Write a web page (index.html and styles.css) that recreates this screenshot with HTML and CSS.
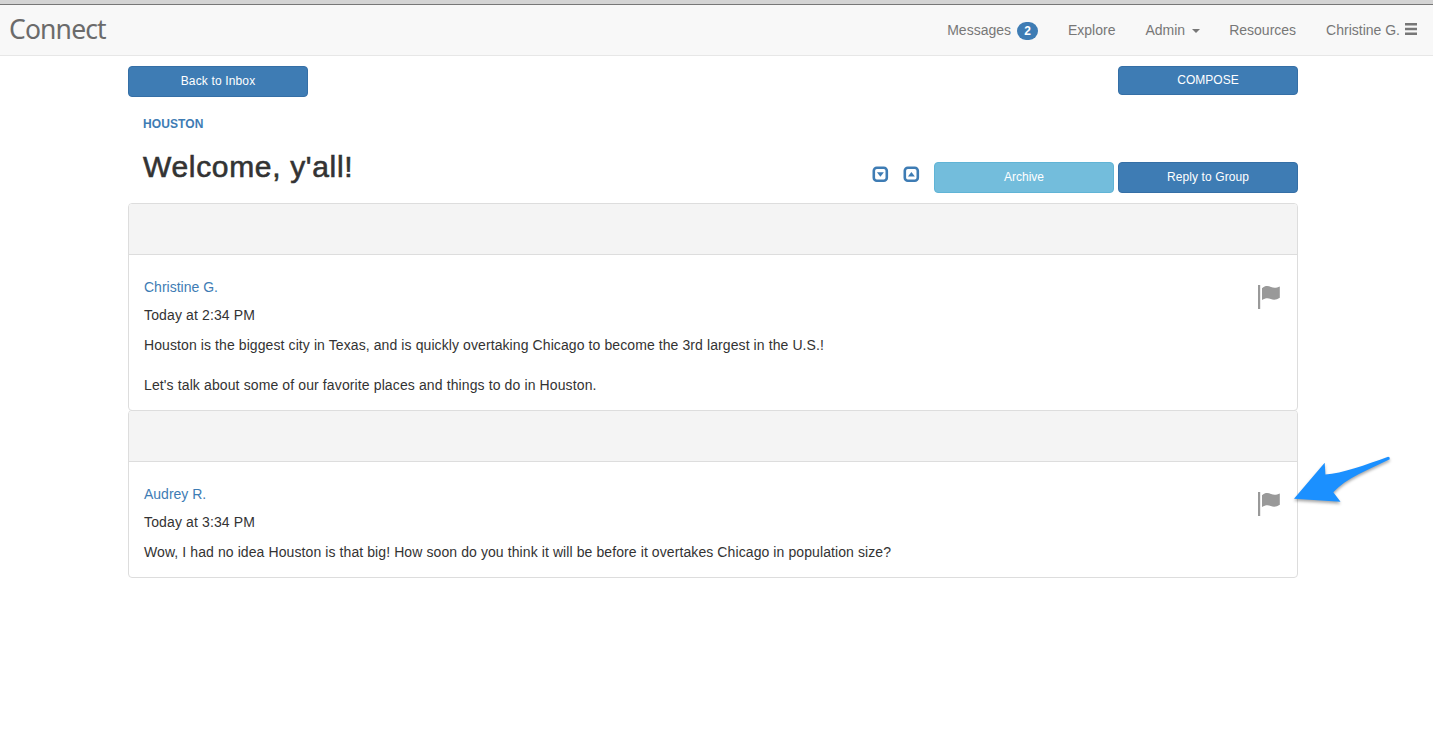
FILE: index.html
```html
<!DOCTYPE html>
<html lang="en">
<head>
<meta charset="utf-8">
<title>Connect</title>
<link rel="stylesheet" href="styles.css">
</head>
<body>
<div class="chrome-edge"></div>
<header class="navbar">
  <a class="brand">Connect</a>
  <nav class="nav">
    <a class="nav-messages">Messages <span class="badge">2</span></a>
    <a class="nav-explore">Explore</a>
    <a class="nav-admin">Admin <span class="caret"></span></a>
    <a class="nav-resources">Resources</a>
    <a class="nav-user">Christine G. <svg class="bars" width="12" height="12" viewBox="0 0 12 12"><path d="M0 0h12v2.500H0zM0 4.700h12v2.600H0zM0 9.500h12V12H0z"/></svg></a>
  </nav>
</header>
<main class="container">
  <div class="toolbar">
    <a class="btn btn-primary btn-back">Back to Inbox</a>
    <a class="btn btn-primary btn-compose">COMPOSE</a>
  </div>
  <div class="group-name">HOUSTON</div>
  <div class="heading">
    <h1>Welcome, y'all!</h1>
    <div class="actions">
      <svg class="toggle" width="16" height="16" viewBox="0 0 16 16"><rect x="1.800" y="1.800" width="13" height="13" rx="3"/><path d="M4.900 6.200h7L8.400 10.700z"/></svg>
      <svg class="toggle toggle-up" width="16" height="16" viewBox="0 0 16 16"><rect x="1.800" y="1.800" width="13" height="13" rx="3"/><path d="M4.900 10.500h7L8.400 6z"/></svg>
      <a class="btn btn-info">Archive</a>
      <a class="btn btn-primary btn-reply">Reply to Group</a>
    </div>
  </div>
  <section class="panel">
    <div class="panel-heading"></div>
    <div class="panel-body">
      <a class="author">Christine G.</a>
      <div class="time">Today at 2:34 PM</div>
      <p class="line-long">Houston is the biggest city in Texas, and is quickly overtaking Chicago to become the 3rd largest in the U.S.!</p>
      <p class="line-second">Let's talk about some of our favorite places and things to do in Houston.</p>
      <svg class="flag" width="24" height="26" viewBox="0 0 24 26"><path d="M1 1h2.200v24H1zM5 4.200C8 1.600 11 1.700 14 3c3 1.200 5.500 1 8.800-.6v11.400c-3 2-6 2.600-9 1.200-3-1.200-5.500-1-8.800 1z"/></svg>
    </div>
  </section>
  <section class="panel">
    <div class="panel-heading"></div>
    <div class="panel-body">
      <a class="author">Audrey R.</a>
      <div class="time">Today at 3:34 PM</div>
      <p class="line-reply">Wow, I had no idea Houston is that big! How soon do you think it will be before it overtakes Chicago in population size?</p>
      <svg class="flag" width="24" height="26" viewBox="0 0 24 26"><path d="M1 1h2.200v24H1zM5 4.200C8 1.600 11 1.700 14 3c3 1.200 5.500 1 8.800-.6v11.400c-3 2-6 2.600-9 1.200-3-1.200-5.500-1-8.800 1z"/></svg>
      <svg class="arrow" width="104" height="54" viewBox="0 0 104 54"><path d="M4 48.700 34.700 12.800 35.400 24.400C52 23.500 76 14.500 97.500 6.900Q100 6.500 99.800 9.200C79 19.500 56 28 43.300 42.300L50.500 51.700Z"/></svg>
    </div>
  </section>
</main>
</body>
</html>
```
FILE: styles.css
```css
* { box-sizing: border-box; }
body {
  margin: 0;
  background: #fff;
  color: #333;
  font: 14px/20px "Liberation Sans", Arial, sans-serif;
}
svg { display: block; }
.chrome-edge { height: 5px; background: #d4d4d4; border-bottom: 1px solid #777; }
.navbar {
  display: flex;
  justify-content: space-between;
  height: 51px;
  padding: 0 16px 0 9px;
  background: #f8f8f8;
  border-bottom: 1px solid #e7e7e7;
  color: #777;
}
.brand {
  font: 26.5px/48px "Noto Sans", sans-serif;
  letter-spacing: -0.85px;
  color: #6b6b6b;
}
.nav { display: flex; gap: 30px; line-height: 50px; }
.nav a { display: flex; align-items: center; white-space: nowrap; }
.badge {
  margin: 2px 0 0 6px;
  width: 21px;
  height: 18px;
  border-radius: 9px;
  background: #3e7cb4;
  color: #fff;
  font-size: 12px;
  font-weight: bold;
  line-height: 18px;
  text-align: center;
}
.caret {
  margin: 2px -1px 0 7px;
  border: 4px solid transparent;
  border-top-color: #777;
  border-bottom: 0;
}
.bars { margin: -3px 0 0 5px; fill: #777; }
.container { width: 1170px; margin: 10px 7px 0 128px; }
.toolbar { display: flex; justify-content: space-between; align-items: flex-start; }
.btn {
  width: 180px;
  height: 31px;
  border: 1px solid #356fa6;
  border-radius: 4px;
  color: #fff;
  font-size: 12px;
  line-height: 28px;
  text-align: center;
}
.btn-primary { background: #3e7cb4; }
.btn-back { letter-spacing: 0.15px; }
.btn-reply { letter-spacing: 0.1px; }
.btn-info { background: #73bddc; border-color: #60b4d6; }
.btn-compose { height: 29px; line-height: 26px; }
.group-name {
  margin: 17px 0 0 15px;
  color: #3e7cb4;
  font-size: 12px;
  font-weight: bold;
  letter-spacing: 0.1px;
}
.heading { display: flex; justify-content: space-between; height: 69px; padding-left: 15px; }
h1 {
  margin: 15px 0 0;
  font-size: 30px;
  line-height: 36px;
  font-weight: normal;
  letter-spacing: 0.67px;
  -webkit-text-stroke: 0.6px #333;
}
.actions { display: flex; gap: 4px; padding-top: 28px; }
.toggle { margin: 4px 11px 0 0; fill: #3e7cb4; overflow: visible; }
.toggle rect { fill: none; stroke: #3e7cb4; stroke-width: 2.6; }
.panel { border: 1px solid #ddd; border-radius: 4px; }
.panel + .panel { margin-top: -1px; }
.panel-heading { height: 51px; background: #f4f4f4; border-bottom: 1px solid #ddd; border-radius: 3px 3px 0 0; }
.panel-body { position: relative; padding: 22px 15px 15px; }
.author { display: block; color: #3e7cb4; }
.time { margin-top: 8px; letter-spacing: 0.13px; }
.panel p { width: max-content; margin: 10px 0 0; letter-spacing: 0.093px; }
.panel .line-second { margin-top: 20px; letter-spacing: 0.118px; }
.flag { position: absolute; right: 16px; top: 29px; fill: #999; }
.arrow { position: absolute; left: 1161px; top: -12px; fill: #1b90ff; filter: drop-shadow(0 2px 1.5px rgba(0,0,0,.35)); }
```
